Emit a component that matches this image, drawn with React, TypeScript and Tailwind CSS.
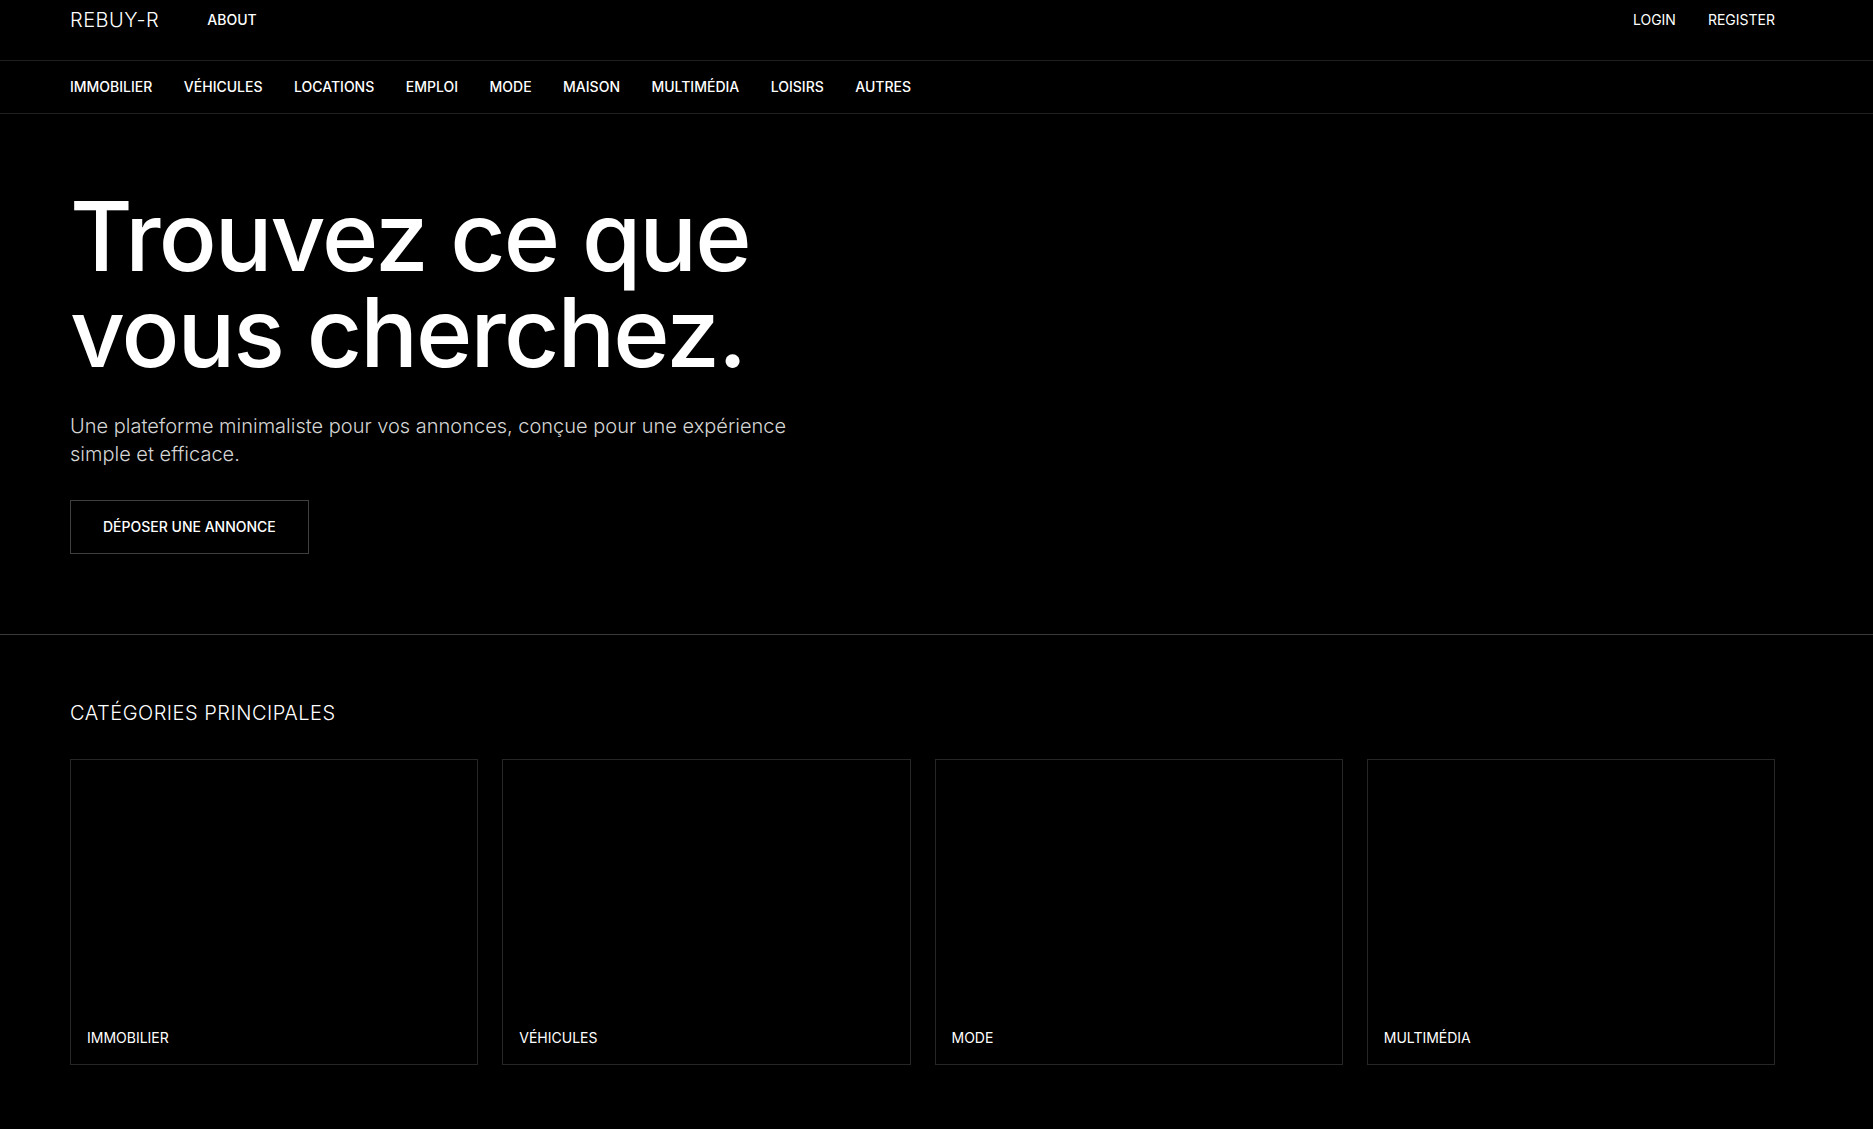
const navItems = ["IMMOBILIER", "VÉHICULES", "LOCATIONS", "EMPLOI", "MODE", "MAISON", "MULTIMÉDIA", "LOISIRS", "AUTRES"];

const categories = ["IMMOBILIER", "VÉHICULES", "MODE", "MULTIMÉDIA"];

const Header = () => {
    return (
        <header className="border-b border-[#1f1f1f]">
            <div className="flex items-start justify-between h-[60px] pt-[6px] pl-[70px] pr-[98px]">
                <div className="flex items-center gap-12">
                    <a className="text-xl font-light tracking-wide">REBUY-R</a>
                    <a className="text-sm font-medium">ABOUT</a>
                </div>
                <div className="flex items-center gap-8 pt-[4px] text-sm">
                    <a>LOGIN</a>
                    <a>REGISTER</a>
                </div>
            </div>
        </header>
    )
}

const CategoryNav = () => {
    return (
        <nav className="border-b border-[#1f1f1f]">
            <ul className="flex gap-[31.5px] py-4 pl-[70px] pr-[98px] text-sm font-medium">
                {navItems.map((item) => (
                    <li key={item}><a>{item}</a></li>
                ))}
            </ul>
        </nav>
    )
}

const Hero = () => {
    return (
        <section className="border-b border-[#3a3a3a] pt-[74px] pb-20 pl-[70px] pr-[98px]">
            <h1 className="text-8xl leading-none font-medium tracking-[-0.02em]">
                Trouvez ce que<br />vous cherchez.
            </h1>
            <p className="mt-8 max-w-3xl text-xl font-light text-neutral-300">
                Une plateforme minimaliste pour vos annonces, conçue pour une expérience simple et efficace.
            </p>
            <button className="mt-8 border border-[#3f3f3f] px-8 py-4 text-sm font-medium">
                DÉPOSER UNE ANNONCE
            </button>
        </section>
    )
}

const Categories = () => {
    return (
        <section className="pt-16 pb-16 pl-[70px] pr-[98px]">
            <h2 className="text-xl font-light tracking-wide mb-8">CATÉGORIES PRINCIPALES</h2>
            <div className="grid grid-cols-4 gap-6">
                {categories.map((cat) => (
                    <div key={cat} className="aspect-[4/3] border border-[#262626] flex items-end p-4">
                        <span className="text-sm">{cat}</span>
                    </div>
                ))}
            </div>
        </section>
    )
}

export default function App() {
    return (
        <div className="min-h-screen bg-black text-white" style={{ fontFamily: "Inter, 'Noto Sans', sans-serif" }}>
            <Header />
            <CategoryNav />
            <Hero />
            <Categories />
        </div>
    )
}
